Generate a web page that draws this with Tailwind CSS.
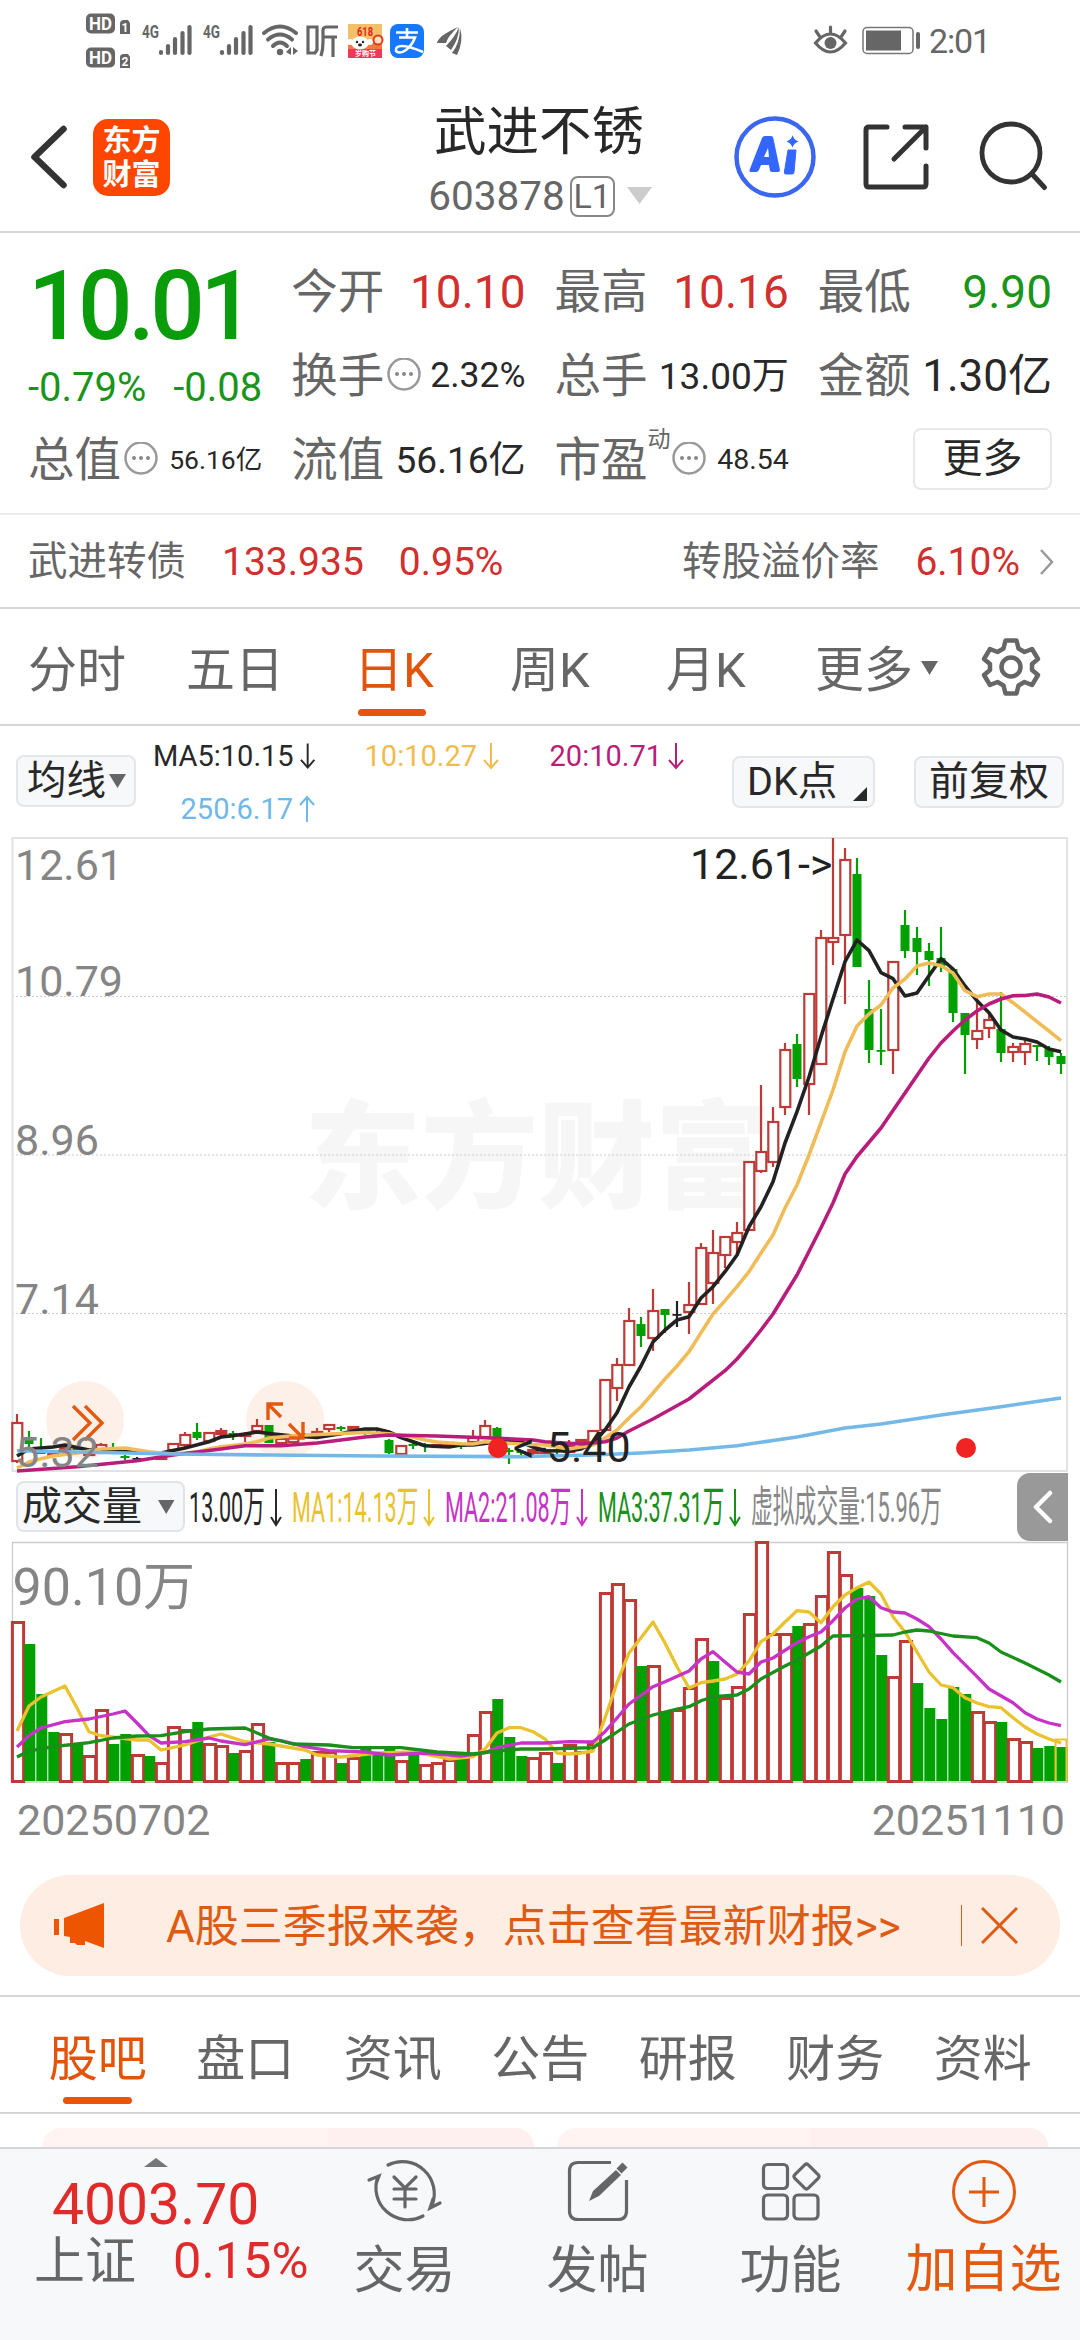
<!DOCTYPE html>
<html lang="zh-CN">
<head>
<meta charset="utf-8">
<title>武进不锈 603878</title>
<script src="https://cdn.jsdelivr.net/npm/@tailwindcss/browser@4"></script>
</head>
<body class="bg-white">
<div class="flex h-[2340px] w-[1080px] flex-col overflow-hidden bg-white font-['Roboto','Noto_Sans_CJK_SC',sans-serif] leading-none whitespace-nowrap text-[#666]">

  <!-- status bar -->
  <div class="h-20 shrink-0">
    <svg width="1080" height="80" viewBox="0 0 1080 80" fill="#666">
      <rect x="86" y="13.500" width="29" height="20" rx="5"/><rect x="86" y="47.500" width="29" height="20" rx="5"/>
      <g font-size="18" font-weight="700" fill="#fff"><text x="89" y="30" textLength="23" lengthAdjust="spacingAndGlyphs">HD</text><text x="89" y="64" textLength="23" lengthAdjust="spacingAndGlyphs">HD</text></g>
      <path d="M120 24q0-4 4-4h4l2 3v11h-10zM120 57q0-3 4-3h4l2 3v11h-10z"/>
      <g font-size="12" font-weight="700" fill="#fff"><text x="121.500" y="32">1</text><text x="121.500" y="66">2</text></g>
      <g font-size="18" font-weight="700"><text x="142" y="38" textLength="17" lengthAdjust="spacingAndGlyphs">4G</text><text x="203" y="38" textLength="17" lengthAdjust="spacingAndGlyphs">4G</text></g>
      <path d="M161 52v1M168 46v7M175 39v14M182.500 33v20M189.500 27v26M222 52v1M229 46v7M236 39v14M243.500 33v20M250.500 27v26" stroke="#666" stroke-width="4.200" stroke-linecap="round"/>
      <g fill="none" stroke="#666" stroke-width="4" stroke-linecap="round"><path d="M264 33q16-13 32 0M268 39.500q12-10 24 0M273 46q7-7 14 0"/></g>
      <circle cx="280" cy="52" r="3.200"/><path d="M291 47v8l-5-3zM293 47v8l5-4z"/>
      <path d="M308 27h9v23l-2 3h-7zM321 56q2-6 2-14V30q0-3 4-3h11M323 37h14M333 37v20" fill="none" stroke="#666" stroke-width="3.200"/>
      <rect x="348" y="24" width="34" height="34" fill="#f3c06a"/><path d="M348 48h34v10h-34z" fill="#f0385a"/><path d="M348 42l34-2v9h-34z" fill="#f57a3a"/>
      <ellipse cx="360" cy="43" rx="9" ry="6.500" fill="#fff"/><circle cx="350" cy="42" r="3" fill="#fff"/><circle cx="370" cy="42" r="3" fill="#fff"/><circle cx="357" cy="42" r="1.200" fill="#222"/><circle cx="363" cy="42" r="1.200" fill="#222"/><ellipse cx="360" cy="45" rx="2" ry="1.400" fill="#222"/>
      <circle cx="378" cy="40" r="4.500" fill="#fbe3b5" stroke="#e23a20" stroke-width="2"/>
      <text x="357" y="36" font-size="13" font-weight="700" fill="#e2231a" textLength="16" lengthAdjust="spacingAndGlyphs">618</text>
      <text x="355" y="56" font-size="7" font-weight="700" fill="#fff">岁购节</text>
      <rect x="390" y="24" width="34" height="34" rx="8" fill="#1677ff"/>
      <path d="M396 32.500h22M407 28v9M399 37.500h16q-3 8-9 12.500t-10 1q-1-5 6-5t21 6" fill="none" stroke="#fff" stroke-width="2.600"/>
      <path d="M437 43q1-7 21-16q-10 9-12 16zM446 46q9-9 13-19q0 12-8 23zM452 53q8-10 8-25q4 13-3 27z"/>
      <path d="M815.500 43q15-18 30 0q-15 18-30 0zM820 37l-4-6M830.500 32v-5M841 37l4-6" fill="none" stroke="#666" stroke-width="3.200" stroke-linecap="round"/><circle cx="830.500" cy="43" r="6"/>
      <rect x="863" y="27.500" width="50" height="26" rx="4" fill="none" stroke="#777" stroke-width="1.500"/><rect x="866" y="30.500" width="35" height="20"/><rect x="916" y="32" width="4" height="17" rx="2"/>
      <text x="929" y="53" font-size="34" textLength="62">2:01</text>
    </svg>
  </div>

  <!-- title bar -->
  <header class="flex h-[153px] shrink-0 border-b-2 border-[#d6d6d6]">
    <svg width="66" height="151" viewBox="0 80 66 151" class="ml-5 w-[73px]" fill="none" stroke="#333" stroke-width="6.500" stroke-linecap="round" stroke-linejoin="round"><path d="M40 129L11 157L40 185"/></svg>
    <div class="mt-[39px] flex size-[77px] flex-col items-center justify-center rounded-[15px] bg-[#ff4601] text-[29px]/[34px] font-bold text-white"><span>东方</span><span>财富</span></div>
    <div class="ml-[229px] w-[280px]">
      <div class="mt-[26px] text-center text-[52.500px]/[52px] text-[#282828]">武进不锈</div>
      <div class="mt-[17px] flex h-[42px] items-center justify-center pl-[2px] text-[40.500px]">
        <span>603878</span>
        <span class="ml-[5px] flex h-[41px] w-[45px] items-center justify-center rounded-lg border-2 border-[#888] text-[34px]">L1</span>
        <svg width="25" height="18" viewBox="0 0 25 18" class="ml-3"><path d="M0 0h25L12.500 17z" fill="#ccc"/></svg>
      </div>
    </div>
    <svg width="340" height="151" viewBox="719 80 340 151" class="ml-[40px]" fill="none">
      <circle cx="775" cy="157" r="38.500" stroke="#3b66f0" stroke-width="4.500"/>
      <path fill-rule="evenodd" d="M762 138q1-2 3-2h6q2 0 2.300 2l6.700 32q0 2-2 2h-6q-2 0-2.200-2l-.8-5h-8l-2 5q-1 2-3 2h-5q-2 0-1.500-2zM764 157h5l-1-9z" fill="#3366ff"/>
      <path d="M788 150h8l-2 22q0 2-2 2h-6q-2 0-1.600-2z" fill="#3366ff" stroke="#3366ff" stroke-linejoin="round"/>
      <path d="M792.500 135q1.500 5 6 6.500q-4.500 1.500-6 6q-1.500-4.500-6-6q4.500-1.500 6-6z" fill="#3366ff"/>
      <path d="M887 127h-18q-3 0-3 3v54q0 3 3 3h54q3 0 3-3v-18M905 127h21v21M926 127L894 159" stroke="#333" stroke-width="5" stroke-linecap="round" stroke-linejoin="round"/>
      <circle cx="1011" cy="153" r="29" stroke="#333" stroke-width="4.800"/><path d="M1032 174l12.500 13.500" stroke="#333" stroke-width="5" stroke-linecap="round"/>
    </svg>
  </header>

  <!-- quote figures -->
  <section class="grid h-[282px] shrink-0 grid-cols-4 grid-rows-[84px_84px_84px] gap-x-[29px] border-b-2 border-[#ececec] pt-[17px] pr-[28px] pl-7 text-[46.500px]">
    <div class="row-span-2">
      <div class="mt-[12px] text-[96px]/[88px] font-medium tracking-[-4.500px] text-[#0a9c0a]">10.01</div>
      <div class="mt-[18px] flex items-center justify-between text-[40px] text-[#1a941a]"><span>-0.79%</span><span>-0.08</span></div>
    </div>
    <div class="flex items-center justify-between"><span>今开</span><span class="text-[46px] text-[#d22f2f]">10.10</span></div>
    <div class="flex items-center justify-between"><span>最高</span><span class="text-[46px] text-[#d22f2f]">10.16</span></div>
    <div class="flex items-center justify-between"><span>最低</span><span class="text-[46px] text-[#1a941a]">9.90</span></div>
    <div class="flex items-center"><span>换手</span><svg width="36" height="36" viewBox="0 0 36 36" class="ml-[2px]"><circle cx="18" cy="16" r="15.500" fill="none" stroke="#999" stroke-width="2.500"/><g fill="#888"><circle cx="11" cy="16" r="2"/><circle cx="18" cy="16" r="2"/><circle cx="25" cy="16" r="2"/></g></svg><span class="ml-auto text-[35.500px] text-[#282828]">2.32%</span></div>
    <div class="flex items-center justify-between"><span>总手</span><span class="text-[37px] text-[#282828]">13.00万</span></div>
    <div class="flex items-center justify-between"><span>金额</span><span class="text-[44px] text-[#282828]">1.30亿</span></div>
    <div class="flex items-center"><span>总值</span><svg width="36" height="36" viewBox="0 0 36 36" class="ml-[2px]"><circle cx="18" cy="16" r="15.500" fill="none" stroke="#999" stroke-width="2.500"/><g fill="#888"><circle cx="11" cy="16" r="2"/><circle cx="18" cy="16" r="2"/><circle cx="25" cy="16" r="2"/></g></svg><span class="ml-auto text-[26.5px] text-[#282828]">56.16亿</span></div>
    <div class="flex items-center justify-between"><span>流值</span><span class="text-[37px] text-[#282828]">56.16亿</span></div>
    <div class="flex items-center"><span>市盈</span><span class="-mt-[42px] text-[23px]">动</span><svg width="36" height="36" viewBox="0 0 36 36"><circle cx="18" cy="16" r="15.500" fill="none" stroke="#999" stroke-width="2.500"/><g fill="#888"><circle cx="11" cy="16" r="2"/><circle cx="18" cy="16" r="2"/><circle cx="25" cy="16" r="2"/></g></svg><span class="ml-auto text-[28.5px] text-[#282828]">48.54</span></div>
    <div class="flex items-center justify-end"><span class="-mt-[3px] flex h-[62px] w-[139px] items-center justify-center rounded-lg border-2 border-[#e8e8e8] text-[40px] text-[#282828]">更多</span></div>
  </section>

  <!-- convertible bond -->
  <section class="flex h-[94px] shrink-0 items-center border-b-2 border-[#d6d6d6] pt-[2px] pr-[26px] pl-7 text-[39.5px]">
    <span>武进转债</span><span class="ml-[36px] text-[39px] text-[#d22f2f]">133.935</span><span class="ml-[35px] text-[39px] text-[#d22f2f]">0.95%</span>
    <span class="ml-auto">转股溢价率</span><span class="ml-[36px] text-[39px] text-[#d22f2f]">6.10%</span>
    <svg width="14" height="26" viewBox="0 0 14 26" class="ml-5" fill="none" stroke="#999" stroke-width="2.500"><path d="M1 1l11 12L1 25"/></svg>
  </section>

  <!-- period tabs -->
  <nav class="flex h-[117px] shrink-0 items-center border-b-2 border-[#d6d6d6] pt-[7px] pl-7 text-[49px]">
    <span class="w-[158px]">分时</span><span class="w-[168px]">五日</span>
    <span class="relative w-[156px] text-[#e2540b]">日K<i class="absolute top-[63px] left-[4px] h-[7px] w-[68px] rounded-full bg-[#e6560a]"></i></span>
    <span class="w-[156px]">周K</span><span class="w-[149px]">月K</span><span>更多</span>
    <svg width="18" height="14" viewBox="0 0 18 14" class="mb-1 ml-[8px]"><path d="M0 0h17L8.500 14z" fill="#666"/></svg>
    <svg width="64" height="64" viewBox="-32 -32 64 64" class="mb-[7px] ml-[40px]" fill="none" stroke="#666" stroke-width="4.500" stroke-linejoin="round"><path d="M-5.500-26.500h11l2 8 6 3.500 7.500-3 6 10-6 5v6l6 5-6 10-7.500-3-6 3.500-2 8h-11l-2-8-6-3.500-7.500 3-6-10 6-5v-6l-6-5 6-10 7.500 3 6-3.500z"/><circle r="9.500"/></svg>
  </nav>

  <!-- moving average legend -->
  <section class="flex h-[110px] shrink-0 pl-4 text-[29px]">
    <div class="mt-[29px] flex h-[52px] w-[120px] items-center rounded-lg border-2 border-[#e4e6ea] bg-[#f7f8fa] pl-[9px] text-[39.5px] text-[#282828]">均线<svg width="18" height="14" viewBox="0 0 18 14" class="ml-[3px]"><path d="M0 0h17L8.500 14z" fill="#666"/></svg></div>
    <div class="mt-[13px] ml-[17px] grid w-[579px] auto-rows-[53px] grid-cols-[162px_184px_185px]">
      <span class="flex h-[34px] items-center justify-end gap-[6px] text-[#282828]">MA5:10.15<svg width="16" height="28" viewBox="0 0 16 28" fill="none" stroke="currentColor" stroke-width="2"><path d="M8 1v25M1 18l7 8 7-8"/></svg></span>
      <span class="flex h-[34px] items-center justify-end gap-[6px] text-[#f0bc4e]">10:10.27<svg width="16" height="28" viewBox="0 0 16 28" fill="none" stroke="currentColor" stroke-width="2"><path d="M8 1v25M1 18l7 8 7-8"/></svg></span>
      <span class="flex h-[34px] items-center justify-end gap-[6px] text-[#b81d7c]">20:10.71<svg width="16" height="28" viewBox="0 0 16 28" fill="none" stroke="currentColor" stroke-width="2"><path d="M8 1v25M1 18l7 8 7-8"/></svg></span>
      <span class="flex h-[34px] items-center justify-end gap-[6px] text-[#70b8e8]">250:6.17<svg width="16" height="28" viewBox="0 0 16 28" fill="none" stroke="currentColor" stroke-width="2"><path d="M8 27V2M1 10l7-8 7 8"/></svg></span>
    </div>
    <div class="mt-[30px] flex h-[52px] w-[143px] items-center rounded-lg border-2 border-[#e4e6ea] bg-[#f7f8fa] pl-[13px] text-[39.5px] text-[#282828]">DK点<svg width="14" height="14" viewBox="0 0 14 14" class="mt-[24px] ml-auto mr-[6px]"><path d="M14 0v14H0z" fill="#282828"/></svg></div>
    <div class="mt-[30px] ml-[39px] flex h-[52px] w-[150px] items-center justify-center rounded-lg border-2 border-[#e4e6ea] bg-[#f7f8fa] text-[40px] text-[#282828]">前复权</div>
  </section>

  <!-- candlestick chart -->
  <svg class="h-[637px] w-[1080px] shrink-0 overflow-visible" viewBox="0 836 1080 637">
    <text x="304" y="1199" font-size="117" font-weight="900" fill="#f6f6f6">东方财富</text>
    <path d="M12 996.500H1067M12 1155H1067M12 1313.500H1067" stroke="#ccc" stroke-width="1" stroke-dasharray="2 2"/>
    <path d="M12.500 838H1067V1471H12.500z" fill="none" stroke="#e2e2e2" stroke-width="2"/>
    <circle cx="85" cy="1420" r="39" fill="#fdf0e9"/><circle cx="285" cy="1420" r="39" fill="#fdf0e9"/>
    <g id="candles"></g>
    <g id="mas" fill="none" stroke-width="3.600" stroke-linejoin="round"></g>
    <path d="M73 1406l17 17-17 17M85 1406l17 17-17 17M268 1420v-16h15M268 1404l13 13M289 1424l14 14M303 1422v16h-14" fill="none" stroke="#e2590f" stroke-width="3.400"/>
    <g font-size="43" fill="#858585"><text x="15" y="880">12.61</text><text x="15" y="996">10.79</text><text x="15" y="1155">8.96</text><text x="15" y="1314">7.14</text><text x="15" y="1467">5.32</text></g>
    <g font-size="43" fill="#222"><text x="690" y="879">12.61-&gt;</text><text x="513" y="1461.500">&lt;-5.40</text></g>
    <circle cx="498" cy="1448" r="10" fill="#f02222"/><circle cx="966" cy="1448" r="10" fill="#f02222"/>
  </svg>

  <!-- volume legend -->
  <section class="flex h-[68px] shrink-0 pl-4">
    <div class="mt-[8px] flex h-[51px] w-[169px] items-center rounded-lg border-2 border-[#e0e3e8] bg-[#f7f8fa] pl-[4px] text-[40px] text-[#282828]">成交量<svg width="17" height="14" viewBox="0 0 17 14" class="ml-[16px]"><path d="M0 0h16.500L8.200 14z" fill="#666"/></svg></div>
    <svg width="832" height="68" viewBox="185 1473 832 68" font-size="43">
      <text transform="translate(189 1522) scale(.502 1)" fill="#282828">13.00万</text>
      <text transform="translate(292 1522) scale(.502 1)" fill="#e9c22e">MA1:14.13万</text>
      <text transform="translate(445 1522) scale(.502 1)" fill="#c733c7">MA2:21.08万</text>
      <text transform="translate(598 1522) scale(.502 1)" fill="#1a8f1a">MA3:37.31万</text>
      <text transform="translate(751 1522) scale(.507 1)" fill="#888">虚拟成交量:15.96万</text>
      <g fill="none" stroke-width="2"><path stroke="#282828" d="M276 1489v36M271 1517l5 8 5-8"/><path stroke="#e9c22e" d="M429 1489v36M424 1517l5 8 5-8"/><path stroke="#c733c7" d="M582 1489v36M577 1517l5 8 5-8"/><path stroke="#1a8f1a" d="M735 1489v36M730 1517l5 8 5-8"/></g>
    </svg>
    <div class="flex h-[68px] w-[51px] items-center justify-center rounded-l-[13px] bg-[#999]"><svg width="20" height="34" viewBox="0 0 20 34" fill="none" stroke="#fff" stroke-width="4.500" stroke-linecap="round" stroke-linejoin="round"><path d="M17 3L3 17l14 14"/></svg></div>
  </section>

  <!-- volume chart -->
  <svg class="h-[243px] w-[1080px] shrink-0" viewBox="0 1541 1080 243">
    <path d="M12.500 1542.500H1067.500V1782H12.500z" fill="none" stroke="#ccc" stroke-width="1.300"/>
    <g id="vols"></g>
    <path d="M1055.500 1782V1739.500H1066.500V1782" fill="none" stroke="#e9c22e" stroke-width="2"/>
    <g id="vmas" fill="none" stroke-width="3.300" stroke-linejoin="round"></g>
    <text x="12.500" y="1604.500" font-size="52" fill="#858585">90.10万</text>
  </svg>
  <div class="flex h-[91px] shrink-0 justify-between pt-[15px] pr-[15px] pl-[17px] text-[43px]/[43px] text-[#858585]"><span>20250702</span><span>20251110</span></div>

  <!-- notice -->
  <div class="mx-5 flex h-[101px] shrink-0 items-center rounded-full bg-[#fdede3] text-[44px] text-[#df5a12]">
    <svg width="56" height="46" viewBox="0 0 56 46" class="ml-[32px]"><path d="M2 16h5v16H2zM12 15L52 0v45l-19-7v4h-8l-2-2h-5v-6l-6-1z" fill="#ee5500"/></svg>
    <span class="mt-[2px] ml-[58px]">A股三季报来袭，点击查看最新财报&gt;&gt;</span>
    <i class="ml-auto h-[41px] w-px bg-[#df5a12]"></i>
    <svg width="37" height="37" viewBox="0 0 37 37" class="mr-[42px] ml-[19px]" fill="none" stroke="#df5a12" stroke-width="3"><path d="M1 1l35 35M36 1L1 36"/></svg>
  </div>

  <!-- content tabs -->
  <nav class="mt-[19px] flex h-[119px] shrink-0 items-center border-y-2 border-[#d6d6d6] pt-[9px] pl-6 text-[49px]">
    <span class="relative w-[147.500px] text-center text-[#e2540b]">股吧<i class="absolute top-[62px] left-[39px] h-[7px] w-[69px] rounded-full bg-[#e6560a]"></i></span>
    <span class="w-[147.500px] text-center">盘口</span><span class="w-[147.500px] text-center">资讯</span><span class="w-[147.500px] text-center">公告</span><span class="w-[147.500px] text-center">研报</span><span class="w-[147.500px] text-center">财务</span><span class="w-[147.500px] text-center">资料</span>
  </nav>
  <div class="flex h-[33px] shrink-0 gap-[23px] pt-[14px] pl-[42px]">
    <div class="flex h-[19px] w-[492px] shrink-0 overflow-hidden rounded-t-[24px] bg-[#fff4f1]"><div class="ml-auto w-[206px] bg-[#fdf0ee]"></div></div>
    <div class="flex h-[19px] w-[491px] shrink-0 overflow-hidden rounded-t-[24px] bg-[#fff4f1]"><div class="ml-auto w-[238px] bg-[#fdf0ee]"></div></div>
  </div>

  <!-- bottom bar -->
  <footer class="flex h-[193px] shrink-0 border-t-2 border-[#d4d6d9] bg-[#f7f8fa] text-[51px]">
    <div class="w-[308px] shrink-0">
      <svg width="24" height="9" viewBox="0 0 24 9" class="mt-[9px] ml-[144px]"><path d="M0 9L12 0l12 9z" fill="#777"/></svg>
      <div class="mt-[9px] pl-[52px] text-[57px]/[57px] text-[#e02b2b]">4003.70</div>
      <div class="mt-[3px] flex h-[51px] items-center pl-[34px]"><span>上证</span><span class="ml-[37px] text-[50.500px] text-[#e02b2b]">0.15%</span></div>
    </div>
    <div class="flex w-[193px] flex-col items-center"><svg width="80" height="76" viewBox="-40 -38 80 76" class="mt-[5px]" fill="none" stroke="#666" stroke-width="3.200" stroke-linecap="round"><path d="M-17-27A32 32 0 0 1 27 13.500M35 11l-10 5 3-9M18 24A32 32 0 0 1-27-15.500M-36-12l10-4-3 8M-11-15L0-4 11-15M0-4v19M-11-3h22M-11 7h22"/></svg><span class="mt-[15px]">交易</span></div>
    <div class="flex w-[193px] flex-col items-center"><svg width="80" height="76" viewBox="-40 -38 80 76" class="mt-[5px]" fill="none" stroke="#666" stroke-width="3.200"><path d="M13-29.500H-20Q-28.500-29.500-28.500-21V19Q-28.500 27.500-20 27.500H20Q28.500 27.500 28.500 19V-12"/><path d="M-9 9l4-10L18-22l5 5L1 4z" fill="#666" stroke="none"/><path d="M21-21l6-6" stroke-width="7" stroke="#666"/></svg><span class="mt-[15px]">发帖</span></div>
    <div class="flex w-[193px] flex-col items-center"><svg width="80" height="76" viewBox="-40 -38 80 76" class="mt-[5px]" fill="none" stroke="#666" stroke-width="3.200" stroke-linejoin="round"><rect x="-27.500" y="-27.500" width="24" height="24" rx="4"/><rect x="-27.500" y="3" width="24" height="24" rx="4"/><rect x="3" y="3" width="24" height="24" rx="4"/><rect x="6" y="-25" width="19" height="19" rx="2.500" transform="rotate(45 15.500 -15.500)"/></svg><span class="mt-[15px]">功能</span></div>
    <div class="flex w-[193px] flex-col items-center text-[52px] text-[#e2590f]"><svg width="80" height="76" viewBox="-40 -38 80 76" class="mt-[5px]" fill="none" stroke="#e2590f" stroke-width="3"><circle cy="0" r="30.500"/><path d="M-15 0h30M0-15v30"/></svg><span class="mt-[14px]">加自选</span></div>
  </footer>
</div>

<script>
const NS = 'http://www.w3.org/2000/svg', X = i => 17 + 12 * i;
function add(id, tag, attrs) {
  const e = document.createElementNS(NS, tag);
  for (const k in attrs) e.setAttribute(k, attrs[k]);
  document.getElementById(id).appendChild(e);
}
// candles: colour, high, body top, body bottom, low
const C = `r 1414 1423 1461 1463|g 1431 1440 1444 1447|g 1438 1452 1454 1454|r 1453 1454 1455 1455|r 1446 1448 1450 1450|g 1446 1448 1450 1450|r 1453 1454 1455 1455|r 1443 1445 1449 1449|g 1443 1448 1450 1450|g 1455 1456 1458 1460|k 1457 1458 1458 1459|g 1457 1458 1460 1460|r 1457 1458 1459 1459|r 1443 1444 1450 1452|r 1432 1435 1445 1449|g 1423 1432 1438 1440|r 1432 1433 1441 1443|r 1428 1431 1434 1436|g 1431 1433 1435 1440|r 1432 1434 1436 1442|r 1419 1426 1431 1433|g 1425 1425 1443 1443|r 1438 1439 1443 1443|r 1437 1438 1442 1443|g 1433 1434 1437 1437|r 1428 1432 1434 1436|r 1424 1425 1429 1432|g 1426 1427 1429 1431|r 1426 1427 1429 1429|g 1428 1429 1431 1435|g 1430 1432 1435 1435|g 1439 1440 1453 1454|r 1445 1446 1454 1454|g 1440 1444 1446 1449|g 1443 1444 1446 1452|r 1444 1445 1447 1447|r 1442 1443 1445 1446|g 1444 1445 1447 1449|r 1430 1438 1442 1444|r 1420 1426 1437 1439|g 1427 1428 1440 1441|g 1448 1450 1452 1464|g 1450 1451 1453 1455|r 1449 1450 1453 1455|r 1449 1450 1453 1454|g 1447 1449 1452 1454|r 1440 1446 1452 1453|r 1439 1440 1443 1443|r 1430 1431 1443 1443|r 1380 1380 1430 1430|r 1358 1365 1388 1401|r 1308 1321 1365 1365|g 1317 1324 1336 1347|r 1289 1311 1338 1351|g 1309 1309 1315 1333|k 1301 1314 1315 1327|r 1282 1305 1312 1334|r 1243 1248 1304 1304|r 1230 1253 1283 1304|r 1237 1237 1255 1268|r 1222 1233 1242 1253|r 1162 1162 1230 1230|r 1085 1152 1171 1173|r 1107 1122 1162 1167|r 1043 1050 1107 1115|g 1034 1044 1079 1087|r 994 994 1084 1115|r 930 938 1064 1064|r 838 938 942 965|r 848 860 935 1004|g 858 874 967 967|g 980 1009 1050 1063|g 1009 1050 1051 1065|r 962 962 1050 1074|g 910 925 951 958|g 927 938 952 975|g 943 951 960 986|g 927 958 966 972|g 969 969 1013 1022|g 1013 1013 1035 1074|r 1002 1031 1039 1049|r 1012 1020 1028 1038|g 992 1029 1053 1062|r 1043 1047 1052 1062|r 1040 1044 1052 1065|g 1045 1045 1047 1061|g 1046 1048 1057 1065|g 1053 1056 1064 1074`.split('|');
const col = {r: '#bf3a36', g: '#00a000', k: '#222'};
C.forEach((s, i) => {
  const [c, h, t, b, l] = s.split(' ').map((v, j) => j ? +v : v), x = X(i), k = col[c];
  if (c === 'r') {
    add('candles', 'path', {d: `M${x} ${h}V${t}M${x} ${b}V${l}`, stroke: k, 'stroke-width': 2.2});
    add('candles', 'rect', {x: x - 4.7, y: t, width: 10, height: b - t, fill: b - t > 3 ? '#fff' : k, stroke: k, 'stroke-width': 2.2});
  } else {
    add('candles', 'path', {d: `M${x} ${h}V${l}`, stroke: k, 'stroke-width': 2.2});
    add('candles', 'rect', {x: x - 4.5, y: t, width: 9, height: Math.max(b - t, 1.8), fill: k});
  }
});
function line(id, s, c) {
  add(id, 'path', {stroke: c, d: 'M' + s.split(' ').map(p => { const [i, y] = p.split(','); return X(+i) + ' ' + y; }).join('L')});
}
line('mas', '0,1456 1,1449 2,1448 3,1447 4,1445 6,1450 8,1450 9,1450.7 10,1453 12,1453 14,1448 16,1441.7 17,1437 18,1435.7 19,1434 20,1432 21,1433.500 23,1436 25,1437.500 27,1433.700 28,1431 29,1429 30,1429 31,1432 32,1437.500 33,1441.700 34,1445.700 36,1447 37,1445 38,1445 39,1443.500 40,1441.700 42,1442 43,1447 44,1450.700 46,1451 47,1449 48,1443 49,1430 50,1412.700 51,1387 52,1366 53,1342 54,1330 55,1320 56,1316.700 57,1298 58,1286.700 59,1271.700 60,1255 61,1226.700 62,1206.700 63,1181.700 64,1143 65,1111.700 66,1077 67,1036.700 68,999 69,961.700 70,940 71,950.700 72,972.700 73,978.700 74,996 75,993 76,975.700 77,958.700 78,969 79,986 80,1000.700 81,1012.700 82,1030 83,1037 84,1039 85,1042 86,1049 87,1051.700', '#222');
line('mas', '0,1468 1,1462 2,1458.700 3,1456 5,1453 7,1449 9,1448 11,1451.700 13,1454 15,1452 16,1449 17,1446.700 19,1444 20,1441.700 21,1438 23,1435.700 26,1434 29,1432.500 31,1433.700 33,1437 34,1440 35,1442 37,1443.700 38,1444 39,1441.700 40,1442.700 42,1444 44,1445 46,1449 48,1445 49,1438 50,1430 51,1418 52,1406.700 53,1393 54,1379 55,1366 56,1351.700 57,1332.700 58,1314 59,1300.700 60,1286.700 61,1271.700 62,1253 63,1235 64,1208 65,1185 66,1155 67,1122.700 68,1090 69,1051.700 70,1026 71,1014 72,1005 73,988 74,979 75,966 76,963 77,965.700 78,973 79,990.700 80,996.700 81,994 82,994 83,1002.700 84,1012 85,1021.700 86,1031 87,1040.700', '#f0bc58');
line('mas', '0,1471 5,1466.700 10,1460.700 13,1455 17,1449 19,1445.700 22,1445.700 25,1443 29,1437 31,1435 35,1436 39,1437.700 43,1440 44,1441.700 47,1444 49,1441.700 50,1438 51,1431 53,1419 56,1399 59,1370.700 60,1359 61,1345 62,1330 63,1314 65,1275 67,1227.700 68,1203 69,1174 70,1156.500 72,1128 74,1093 76,1058 77,1043 78,1031 79,1020 80,1011 81,1004 82,999 83,995.700 84,995.500 85,994 86,997 87,1003', '#b81d7c');
line('mas', '0,1450.700 8,1452.700 13,1454 21,1455 30,1456 42,1456.700 44,1456 48,1455 52,1453 56,1450 60,1445.700 65,1437 69,1428 72,1424 77,1415 82,1406.700 87,1398', '#74b8e8');

// volume bars: colour + top
const V = 'r1621 g1644 g1694 g1732 r1733 g1743 r1755 r1709 g1744 g1734 r1754 g1756 r1762 r1726 r1729 g1722 r1743 r1745 g1753 r1750 r1723 g1742 r1762 r1762 g1759 r1751 r1751 g1763 r1757 g1746 g1755 g1749 r1760 g1755 r1764 r1762 r1759 g1758 r1734 r1711 g1699 g1737 g1756 r1757 r1752 g1763 r1744 r1751 r1743 r1592 r1583 r1599 g1666 r1665 g1711 r1709 r1687 r1638 g1661 r1697 r1686 r1613 r1541 r1633 r1633 g1626 r1623 r1595 r1551 r1574 g1588 g1596 g1655 r1676 r1640 g1683 g1708 g1719 g1687 g1694 r1711 r1721 g1722 r1738 r1741 g1748 g1746 g1747'.split(' ');
V.forEach((s, i) => {
  const y = +s.slice(1), x = X(i) + .6;
  if (s[0] === 'r') add('vols', 'rect', {x: x - 5.2, y: y + 1.5, width: 11.2, height: 1780 - y, fill: '#fff', stroke: '#bf3a36', 'stroke-width': 3});
  else add('vols', 'rect', {x: x - 5.3, y, width: 11, height: 1781 - y, fill: '#00a000'});
});
line('vmas', '0,1731 1,1706 2,1697 4,1686 5,1708 6,1731.700 7,1735.700 10,1740 11,1740 12,1750 14,1745 16,1737 17,1734 19,1741.700 21,1744 24,1750 25,1755 27,1757 30,1753 33,1752 36,1759 38,1756.700 39,1749 40,1733 41,1727.700 42,1727.700 43,1731.700 44,1739 45,1753 46,1754 47,1753 48,1751 49,1718 50,1682.700 51,1653 52,1637.700 53,1622 54,1643 55,1666.700 56,1688 57,1682.700 58,1681 59,1679 60,1674 61,1661 62,1641.700 63,1634 64,1622 65,1610.700 66,1612 67,1622.700 68,1606.700 69,1595 70,1587.700 71,1582 72,1594 73,1616.700 74,1632 75,1652 76,1672 77,1685 78,1687.700 79,1697.700 80,1703 81,1706.700 82,1707.700 83,1717.700 84,1727 85,1734 86,1739 87,1743', '#e9c22e');
line('vmas', '0,1747 1,1735.700 2,1728 4,1721.700 6,1719 8,1714 9,1711 10,1723 11,1735.700 12,1743 14,1741.700 16,1738 17,1741 19,1744.700 21,1739 22,1740.700 24,1746.700 26,1750.700 29,1752 31,1755 34,1753 37,1756 39,1752.700 40,1747.700 42,1743 44,1743 46,1741.700 48,1742 49,1731.700 50,1718 51,1704 53,1686.700 54,1681.700 56,1671 57,1659 58,1651.700 59,1662 60,1672 61,1674 62,1662 63,1658 65,1642.700 66,1636.700 67,1632 68,1620.700 69,1608 70,1599 71,1596.700 72,1607.700 73,1612 74,1613 75,1619 76,1626.700 77,1639 78,1652.700 80,1676.700 81,1689 83,1702.700 84,1712.700 85,1719 86,1723 87,1725.700', '#c733c7');
line('vmas', '0,1757 1,1751 3,1746.700 5,1744 6,1742.700 8,1738 10,1736 12,1735.700 14,1731.700 16,1729 19,1728 20,1733 21,1738 23,1744 26,1745 28,1747.700 32,1747.700 35,1752 38,1754 40,1751 42,1749 44,1749 48,1747.700 49,1740 50,1732 51,1724 53,1715 55,1709 56,1706.700 57,1700.700 58,1696.700 60,1695 61,1689 62,1679 64,1666 65,1660 67,1646 68,1636 70,1635.700 73,1635 74,1632 75,1630 76,1631 78,1636 80,1637.700 81,1643 82,1652 84,1663 86,1675 87,1682', '#1a8f1a');
</script>
</body>
</html>
